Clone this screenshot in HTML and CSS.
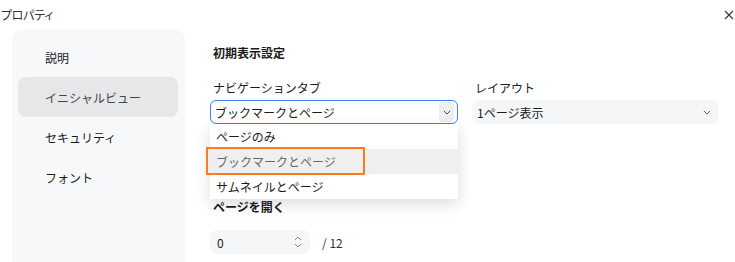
FILE: index.html
```html
<!DOCTYPE html>
<html lang="ja">
<head>
<meta charset="utf-8">
<link rel="stylesheet" href="styles.css">
</head>
<body>
<div class="dialog">
  <div class="titlebar">
    <span class="title">プロパティ</span>
    <svg class="close" width="10" height="10" viewBox="0 0 10 10"><path d="M1 1L9 9M9 1L1 9" stroke="#333" stroke-width="1.1" fill="none"/></svg>
  </div>
  <div class="body">
    <nav class="sidebar">
      <div class="nav-item">説明</div>
      <div class="nav-item active">イニシャルビュー</div>
      <div class="nav-item">セキュリティ</div>
      <div class="nav-item">フォント</div>
    </nav>
    <main class="main">
      <div class="heading">初期表示設定</div>
      <div class="row">
        <div class="field">
          <div class="label">ナビゲーションタブ</div>
          <div class="select focused">
            <span>ブックマークとページ</span>
            <span class="chev-box"><svg width="8" height="5" viewBox="0 0 8 5"><path d="M0.8 0.8L4 4L7.2 0.8" stroke="#444" stroke-width="1" fill="none"/></svg></span>
          </div>
          <div class="dropdown">
            <div class="opt">ページのみ</div>
            <div class="opt hover">ブックマークとページ</div>
            <div class="opt">サムネイルとページ</div>
            <div class="mark"></div>
          </div>
        </div>
        <div class="field">
          <div class="label">レイアウト</div>
          <div class="select plain">
            <span>1ページ表示</span>
            <span class="chev-box nobg"><svg width="8" height="5" viewBox="0 0 8 5"><path d="M0.8 0.8L4 4L7.2 0.8" stroke="#666" stroke-width="1" fill="none"/></svg></span>
          </div>
        </div>
      </div>
      <div class="heading open">ページを開く</div>
      <div class="page-row">
        <div class="num-input">
          <span>0</span>
          <svg class="spin" width="8" height="16" viewBox="0 0 8 16"><path d="M1 6L4 3L7 6M1 10L4 13L7 10" stroke="#777" stroke-width="0.9" fill="none"/></svg>
        </div>
        <span class="total">/ 12</span>
      </div>
    </main>
  </div>
</div>
</body>
</html>
```
FILE: styles.css
```css
* { box-sizing: border-box; }
html, body { margin: 0; padding: 0; background: #fff; }
body {
  font-family: "Noto Sans CJK JP", "Noto Sans", sans-serif;
  font-size: 12px;
  color: #1a1a1a;
  width: 735px;
  height: 262px;
  overflow: hidden;
}
.titlebar {
  height: 30px;
  display: flex;
  align-items: center;
  justify-content: space-between;
  padding: 0 1px 1px 1px;
}
.title {
  font-size: 12px;
  color: #333;
  font-feature-settings: "palt" 1;
  letter-spacing: -0.3px;
}
.body { display: flex; }
.sidebar {
  margin-left: 12px;
  width: 173px;
  height: 240px;
  background: #f7f8fa;
  border-radius: 10px;
  padding: 7px 7px 0 6px;
  display: flex;
  flex-direction: column;
}
.nav-item {
  height: 40px;
  display: flex;
  align-items: center;
  padding-left: 27px;
  border-radius: 8px;
  color: #1a1a1a;
}
.nav-item.active { background: #e6e7e9; color: #444; }
.main { margin-left: 25px; padding-top: 14px; }
.heading {
  font-weight: bold;
  line-height: 18px;
  padding-left: 3px;
}
.row { display: flex; gap: 14px; margin-top: 17px; }
.field { position: relative; width: 248px; }
.field + .field { width: 246px; }
.label { line-height: 18px; padding-left: 3px; margin-bottom: 3px; }
.select {
  height: 24px;
  border-radius: 6px;
  display: flex;
  align-items: center;
  justify-content: space-between;
  padding: 0 4px 0 5px;
}
.select.focused { border: 1px solid #3d82f0; padding-left: 4px; padding-right: 3px; }
.select.plain { background: #f5f6f8; padding-right: 6px; }
.chev-box {
  width: 15px;
  height: 20px;
  background: #eeeff1;
  border-radius: 4px;
  display: flex;
  align-items: center;
  justify-content: center;
}
.chev-box.nobg { background: transparent; width: 10px; }
.dropdown {
  position: absolute;
  left: 0;
  top: 45px;
  width: 248px;
  background: #fff;
  box-shadow: 0 5px 14px rgba(40, 40, 60, 0.16);
  z-index: 2;
}
.opt { height: 25px; line-height: 25px; padding-left: 6px; }
.opt.hover { background: #efefef; color: #666; }
.mark {
  position: absolute;
  left: -4px;
  top: 23px;
  width: 159px;
  height: 28px;
  border: 2px solid #ff7a22;
}
.heading.open { margin-top: 74px; }
.page-row { display: flex; align-items: center; margin-top: 14px; gap: 12px; }
.num-input {
  width: 100px;
  height: 24px;
  background: #f5f6f8;
  border-radius: 8px;
  display: flex;
  align-items: center;
  justify-content: space-between;
  padding: 0 8px 0 7px;
}
.total { color: #333; }
```
